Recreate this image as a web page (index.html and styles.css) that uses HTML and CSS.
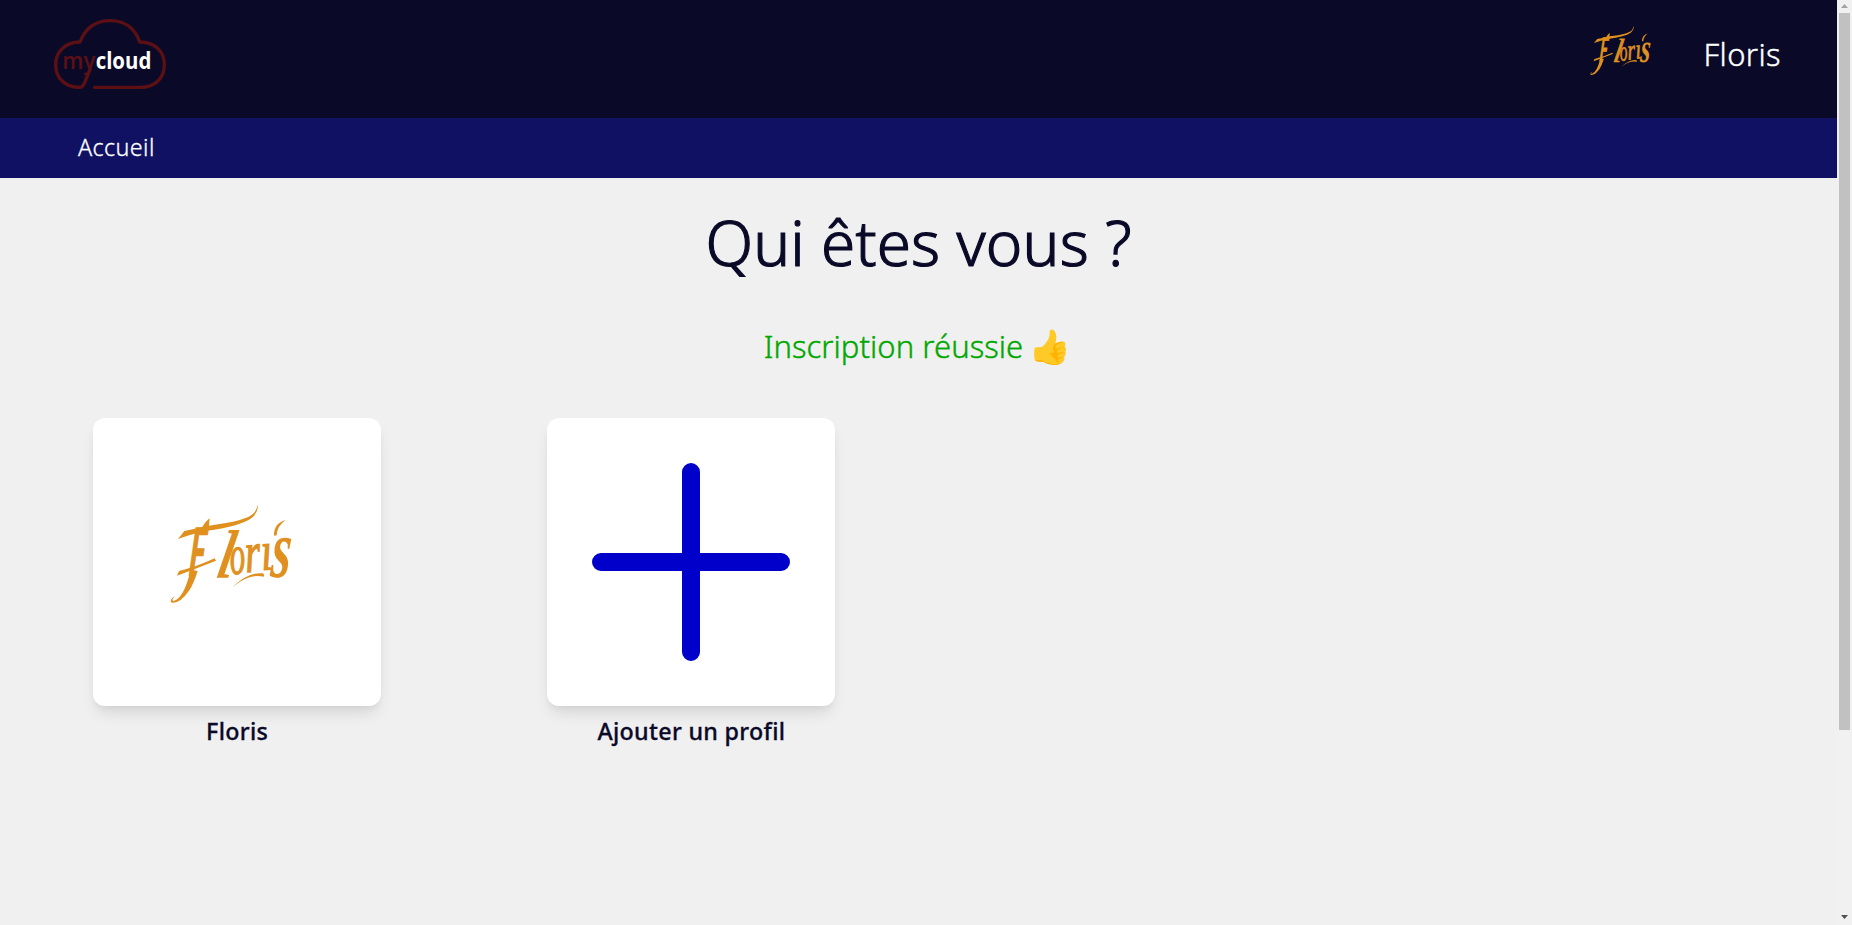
FILE: index.html
```html
<!DOCTYPE html>
<html lang="fr">
<head>
<meta charset="utf-8">
<title>mycloud</title>
<link rel="stylesheet" href="styles.css">
</head>
<body>
<div class="page">
  <div class="content">
    <header class="topbar">
      <svg class="logo" viewBox="0 0 420 270" role="img" aria-label="mycloud">
        <path class="cloud" d="M150 178L133 220Q128 232 119 232C75 232 47 204 47 164C47 123 78 96 120 96C135 58 164 32 210 32C256 32 286 57 299 96C344 96 373 124 373 164C373 204 345 232 302 232H164"/>
        <text class="logo-my" x="67" y="176" textLength="99" lengthAdjust="spacingAndGlyphs">my</text>
        <text class="logo-cloud" x="167" y="176" textLength="167" lengthAdjust="spacingAndGlyphs">cloud</text>
      </svg>
      <div class="account">
        <svg class="signature account-picture" viewBox="0 0 420 345">
          <path d="M54 132L73 108L126 97Q138 78 149 70L147 92Q260 78 281 55Q290 44 293 29Q296 51 274 70Q240 94 138 108Q95 117 54 132Z"/>
          <path d="M51 242L57 228Q110 215 164 190L168 197Q120 216 51 242Z"/>
          <path d="M218 276Q265 230 308 235Q315 239 311 245Q268 235 218 276Z"/>
          <path d="M342 122Q341 85 377 75Q351 93 350 121Z"/>
          <path d="M92 224Q72 310 40 318Q33 317 45 303Q26 315 35 323Q60 327 88 286Q101 266 113 228Z"/>
          <text class="stem" transform="translate(84 240) skewX(-5) scale(.46 1)" font-size="196">F</text>
          <text transform="translate(163 246) skewX(-10) scale(.95 1)" font-size="200">l</text>
          <text transform="translate(212 238) rotate(-4)" font-size="168" textLength="46" lengthAdjust="spacingAndGlyphs">o</text>
          <text transform="translate(258 232) rotate(-4)" font-size="172" textLength="46" lengthAdjust="spacingAndGlyphs">r</text>
          <text transform="translate(306 225) rotate(-4)" font-size="165" textLength="34" lengthAdjust="spacingAndGlyphs">ı</text>
          <text class="bold" transform="translate(329 247) skewX(-5) scale(.74 1)" font-size="250" textLength="80" lengthAdjust="spacingAndGlyphs">s</text>
        </svg>
        <span class="account-name">Floris</span>
      </div>
    </header>
    <nav class="nav"><a class="nav-link">Accueil</a></nav>
    <main class="main">
      <h1 class="title">Qui êtes vous ?</h1>
      <p class="notice"><span class="notice-text">Inscription réussie</span>
        <svg class="thumb" viewBox="0 0 96 108" role="img" aria-label="Pouce levé">
          <path fill="#ffca28" d="M2 56Q15 53 24 54Q35 46 43 31Q48 20 47 8Q48-1 57 2Q66 8 67 23Q67 33 64 43Q78 35 90 38Q97 43 92 52Q99 59 94 68Q98 77 90 84Q94 92 86 100Q78 107 60 107Q43 106 35 100Q28 95 24 96Q10 99 3 95Q-2 76 2 56Z"/>
          <path fill="#ffb300" d="M63 45Q77 36 90 39Q77 40 66 49Q62 56 68 59Q79 55 93 54Q80 59 70 63Q67 69 71 72Q82 69 94 69Q80 74 72 76Q69 84 74 86Q83 84 90 84Q81 88 74 90Q70 97 76 102Q64 99 63 90Q53 81 46 71Q57 73 61 69Q52 57 63 45ZM3 95Q14 91 25 94Q36 102 53 104Q74 107 86 100Q75 110 57 108Q40 106 28 99Q13 99 3 95Z"/>
        </svg>
      </p>
      <div class="profiles">
        <a class="profile">
          <span class="card"><svg class="signature card-signature" viewBox="0 0 420 345">
            <path d="M54 132L73 108L126 97Q138 78 149 70L147 92Q260 78 281 55Q290 44 293 29Q296 51 274 70Q240 94 138 108Q95 117 54 132Z"/>
            <path d="M51 242L57 228Q110 215 164 190L168 197Q120 216 51 242Z"/>
            <path d="M218 276Q265 230 308 235Q315 239 311 245Q268 235 218 276Z"/>
            <path d="M342 122Q341 85 377 75Q351 93 350 121Z"/>
            <path d="M92 224Q72 310 40 318Q33 317 45 303Q26 315 35 323Q60 327 88 286Q101 266 113 228Z"/>
            <text class="stem" transform="translate(84 240) skewX(-5) scale(.46 1)" font-size="196">F</text>
            <text transform="translate(163 246) skewX(-10) scale(.95 1)" font-size="200">l</text>
            <text transform="translate(212 238) rotate(-4)" font-size="168" textLength="46" lengthAdjust="spacingAndGlyphs">o</text>
            <text transform="translate(258 232) rotate(-4)" font-size="172" textLength="46" lengthAdjust="spacingAndGlyphs">r</text>
            <text transform="translate(306 225) rotate(-4)" font-size="165" textLength="34" lengthAdjust="spacingAndGlyphs">ı</text>
            <text class="bold" transform="translate(329 247) skewX(-5) scale(.74 1)" font-size="250" textLength="80" lengthAdjust="spacingAndGlyphs">s</text>
          </svg></span>
          <span class="profile-name">Floris</span>
        </a>
        <a class="profile">
          <span class="card"><svg class="plus" viewBox="0 0 198 198"><path d="M99 9V189M9 99H189"/></svg></span>
          <span class="profile-name">Ajouter un profil</span>
        </a>
      </div>
    </main>
  </div>
  <div class="scrollbar" aria-hidden="true">
    <svg class="arrow" viewBox="0 0 7 4"><path fill="#a3a3a3" d="M0 4L3.5 0L7 4Z"/></svg>
    <span class="scroll-thumb"></span>
    <svg class="arrow arrow-down" viewBox="0 0 7 4"><path fill="#505050" d="M0 0H7L3.5 4Z"/></svg>
  </div>
</div>
</body>
</html>
```

FILE: styles.css
```css
* { box-sizing: border-box; }
body { margin: 0; overflow: hidden; background: #f0f0f0; color: #0a0a28; font-family: "Noto Sans", "Open Sans", sans-serif; }
.page { display: flex; height: 925px; }
.content { flex: 1; min-width: 0; }
.topbar { height: 118px; background: #0a0a28; display: flex; justify-content: space-between; align-items: flex-start; padding: 10px 56px 0 40px; }
.logo { width: 140px; height: 90px; }
.cloud { fill: none; stroke: #5d1014; stroke-width: 10; stroke-linecap: round; stroke-linejoin: round; }
.logo-my, .logo-cloud { font-family: "Open Sans", sans-serif; font-size: 72px; font-weight: 600; fill: #5d1014; }
.logo-cloud { font-weight: 700; fill: #fff; }
.account { display: flex; color: #fff; padding-top: 11px; }
.signature { fill: #df901f; font-family: "Liberation Serif", serif; font-style: italic; }
.signature text { stroke: #df901f; stroke-width: 4; }
.signature .bold { font-weight: 700; stroke: none; }
.signature .stem { font-family: Lato, sans-serif; font-weight: 700; }
.account-picture { width: 70px; height: 57.5px; }
.account-name { font-size: 31px; font-weight: 300; line-height: 44px; margin: 11px 0 0 48px; letter-spacing: .4px; -webkit-text-stroke: .4px; }
.nav { height: 60px; background: #111164; padding: 0 78px; }
.nav-link { display: block; font-size: 23.3px; font-weight: 300; line-height: 58px; letter-spacing: .4px; -webkit-text-stroke: .3px; color: #fff; }
.title { margin: 0; padding-top: 20px; text-align: center; font-size: 62px; line-height: 88px; font-weight: 300; letter-spacing: .15px; -webkit-text-stroke: 1.2px; }
.notice { margin: 0; padding: 36px 7px 0 0; height: 132px; display: flex; justify-content: center; gap: 11px; color: #00a800; font-size: 31px; font-weight: 300; line-height: 48px; letter-spacing: .05px; -webkit-text-stroke: .4px; }
.thumb { width: 32px; height: 36px; margin-top: 7px; }
.profiles { display: grid; grid-template-columns: repeat(4, 1fr); padding: 0 10px; }
.profile { display: flex; flex-direction: column; align-items: center; }
.card { width: 288px; height: 288px; background: #fff; border-radius: 12px; display: flex; align-items: center; justify-content: center; box-shadow: 0 10px 15px -3px rgba(0,0,0,.1), 0 4px 6px -2px rgba(0,0,0,.05); }
.card-signature { width: 140px; height: 115px; margin: -19px 14px 0 0; }
.plus { width: 198px; height: 198px; fill: none; stroke: #0000cb; stroke-width: 18; stroke-linecap: round; }
.profile-name { margin-top: 7px; font-size: 23.3px; line-height: 36px; font-weight: 500; letter-spacing: .3px; -webkit-text-stroke: .3px; }
.scrollbar { width: 15px; background: #f1f1f1; display: flex; flex-direction: column; align-items: center; padding: 4px 0 6px; }
.arrow { width: 7px; height: 4px; }
.scroll-thumb { width: 11px; height: 717px; background: #c1c1c1; margin-top: 5px; }
.arrow-down { margin-top: auto; }
```
